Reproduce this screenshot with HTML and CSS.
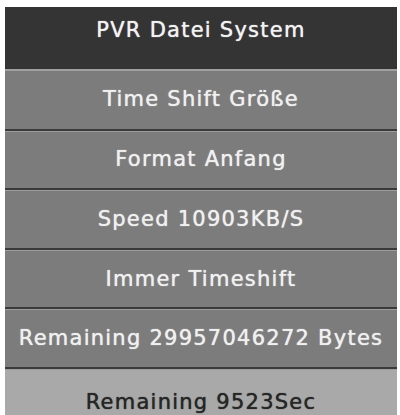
FILE: index.html
```html
<!DOCTYPE html>
<html lang="de">
<head>
    <meta charset="UTF-8">
    <meta name="viewport" content="width=device-width, initial-scale=1.0">
    <title>PVR Datei System</title>
    <link rel="stylesheet" href="styles.css">
</head>
<body>
    <div class="menu">
        <div class="menu-title">PVR Datei System</div>
        <div class="menu-item">Time Shift Größe</div>
        <div class="menu-item">Format Anfang</div>
        <div class="menu-item">Speed 10903KB/S</div>
        <div class="menu-item">Immer Timeshift</div>
        <div class="menu-item">Remaining 29957046272 Bytes</div>
        <div class="menu-item menu-item-active">Remaining 9523Sec</div>
    </div>
</body>
</html>
```
FILE: styles.css
```css
:root {
    --title-bg: #343434;
    --item-bg: #7c7c7c;
    --active-bg: #a9a9a9;
    --line-dark: #3a3a3a;
    --line-light: #9c9c9c;
}

* {
    margin: 0;
    padding: 0;
    box-sizing: border-box;
}

body {
    background: #fff;
    font-family: "DejaVu Sans", Verdana, sans-serif;
    font-size: 21px;
    letter-spacing: 1.25px;
    overflow: hidden;
}

.menu {
    margin: 7px 3px 0 5px;
    display: flex;
    flex-direction: column;
}

.menu-title {
    background: var(--title-bg);
    color: #f2f2f2;
    height: 62px;
    padding-top: 11px;
    text-align: center;
    text-shadow: 0 0 1px #f2f2f2;
}

.menu-item {
    background: var(--item-bg);
    color: #f0f0f0;
    height: 59.6px;
    display: flex;
    align-items: center;
    justify-content: center;
    border-top: 2px solid var(--line-dark);
    box-shadow: inset 0 1px 0 var(--line-light);
    text-shadow: 0 0 1px #f0f0f0;
}

.menu-title + .menu-item {
    border-top: none;
    box-shadow: inset 0 2px 0 #a0a0a0;
}

.menu-item-active {
    background: var(--active-bg);
    color: #262626;
    padding-top: 9px;
    text-shadow: 0 0 1px #262626;
}
```
